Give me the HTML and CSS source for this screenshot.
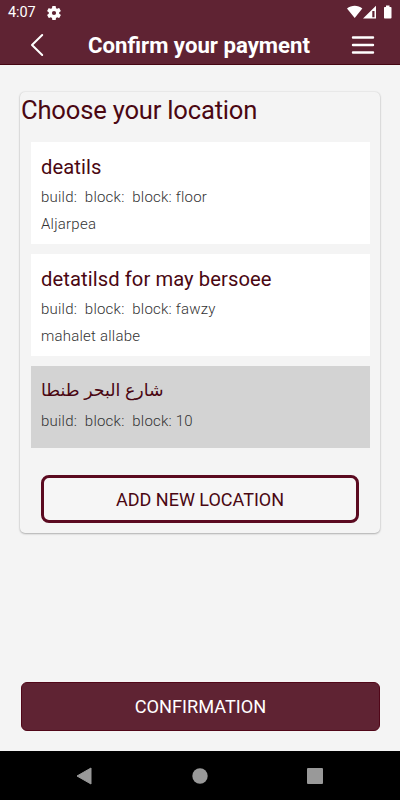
FILE: index.html
```html
<!DOCTYPE html>
<html lang="en">
<head>
<meta charset="utf-8">
<meta name="viewport" content="width=device-width, initial-scale=1">
<title>Confirm your payment</title>
<link rel="stylesheet" href="styles.css">
</head>
<body>
<div class="screen">
  <header class="top">
    <div class="status">
      <span class="time">4:07</span>
      <svg class="gear" width="14" height="14" viewBox="2 2 20 20"><path fill="#fff" fill-rule="evenodd" d="M19.4 13a7.500 7.500 0 0 0 0-2l2.100-1.650a.5.5 0 0 0 .12-.64l-2-3.460a.5.5 0 0 0-.61-.22l-2.490 1a7.300 7.300 0 0 0-1.690-.98l-.38-2.650A.49.49 0 0 0 14 2h-4a.49.49 0 0 0-.49.42l-.38 2.650c-.61.25-1.170.59-1.690.98l-2.490-1a.5.5 0 0 0-.61.22l-2 3.460a.5.5 0 0 0 .12.64L4.570 11a7.900 7.900 0 0 0 0 2l-2.110 1.650a.5.5 0 0 0-.12.64l2 3.460c.12.22.39.3.61.22l2.490-1c.52.4 1.080.73 1.690.98l.38 2.650c.03.24.24.4.49.4h4c.25 0 .46-.16.49-.4l.38-2.650a7.300 7.300 0 0 0 1.690-.98l2.490 1c.23.09.49 0 .61-.22l2-3.460a.5.5 0 0 0-.12-.64zM12 15a3 3 0 1 1 0-6 3 3 0 0 1 0 6z"/></svg>
      <svg class="signals" width="46" height="15" viewBox="0 0 46 15"><path fill="#fff" d="M0 3.500C4.500-.2 11-.2 15.300 3.500L7.700 13z"/><path fill="#fff" fill-rule="evenodd" d="M16 13.500 29 .8v12.700zM25.300 5.900v6.300h2.200V5.900z"/><path fill="#fff" d="M39 .5h3.500V2h1.200q.8 0 .8.800v10q0 .7-.8.700h-6q-.7 0-.7-.7v-10q0-.8.700-.8H39z"/></svg>
    </div>
    <div class="bar">
      <svg class="back" width="14" height="24" viewBox="0 0 14 24"><path d="M12.200 2 2 12l10.200 10" fill="none" stroke="#fff" stroke-width="2" stroke-linecap="round" stroke-linejoin="round"/></svg>
      <h1 class="title">Confirm your payment</h1>
      <svg class="menu" width="24" height="20" viewBox="0 0 24 20"><path d="M2 2.500h20M2 10h20M2 17.500h20" stroke="#fff" stroke-width="2.400" stroke-linecap="round"/></svg>
    </div>
  </header>
  <main class="content">
    <section class="card">
      <h2 class="heading">Choose your location</h2>
      <div class="list">
        <article class="place">
          <h3 class="name">deatils</h3>
          <p class="line">build:&nbsp; block:&nbsp; block: floor</p>
          <p class="line">Aljarpea</p>
        </article>
        <article class="place">
          <h3 class="name">detatilsd for may bersoee</h3>
          <p class="line">build:&nbsp; block:&nbsp; block: fawzy</p>
          <p class="line">mahalet allabe</p>
        </article>
        <article class="place selected">
          <h3 class="name arabic" lang="ar"><bdi>شارع البحر طنطا</bdi></h3>
          <p class="line">build:&nbsp; block:&nbsp; block: 10</p>
        </article>
      </div>
      <button class="add">ADD NEW LOCATION</button>
    </section>
    <button class="confirm">CONFIRMATION</button>
  </main>
  <nav class="nav">
    <svg width="16" height="18" viewBox="0 0 16 18"><path d="M15 1v16L1 9z" fill="#999" stroke="#999" stroke-linejoin="round"/></svg>
    <svg width="16" height="16" viewBox="0 0 16 16"><circle cx="8" cy="8" r="7.700" fill="#999"/></svg>
    <svg width="16" height="16" viewBox="0 0 16 16"><rect width="16" height="16" rx="1" fill="#999"/></svg>
  </nav>
</div>
</body>
</html>
```
FILE: styles.css
```css
* { box-sizing: border-box; }
body, h1, h2, h3, p { margin: 0; font-weight: 400; }
body { font-family: Roboto, "Noto Sans", sans-serif; background: #f4f4f4; }
svg { display: block; flex: none; }
button { font-family: inherit; font-weight: 400; padding: 0; }

.screen { width: 400px; height: 800px; display: flex; flex-direction: column; overflow: hidden; }

.top { height: 65px; background: #5f2333; border-bottom: 1px solid #450512; color: #fff; }
.status { height: 25px; display: flex; align-items: center; padding: 0 7px 0 8px; }
.time { font-size: 14.500px; line-height: 25px; letter-spacing: -.1px; }
.gear { margin-left: 11px; }
.signals { margin-left: auto; margin-top: -1px; }
.bar { height: 39px; display: flex; align-items: center; justify-content: space-between; padding: 0 25px 0 30px; }
.title { padding: 2px 0 0 3px; font-size: 22.200px; line-height: 39px; font-weight: 700; white-space: nowrap; }

.content { flex: 1; display: flex; flex-direction: column; justify-content: space-between; padding: 27px 20px 20px; }
.card { height: 441px; border-radius: 5px; background: #f4f4f4; box-shadow: 0 1px 2px rgba(0,0,0,.25), 0 0 2px rgba(0,0,0,.14); }
.heading { padding-left: 1px; font-size: 25.600px; line-height: 36px; letter-spacing: -.2px; color: #4a0712; white-space: nowrap; }
.list { display: flex; flex-direction: column; gap: 10px; padding: 14px 10px 0 11px; }
.place { height: 102px; padding: 10px 10px 0; background: #fff; }
.name { font-size: 20.200px; line-height: 30px; letter-spacing: .08px; color: #4a0712; white-space: nowrap; }
.line { font-size: 15px; font-weight: 300; line-height: 27px; letter-spacing: .22px; color: #333; white-space: nowrap; }
.name + .line { margin-top: 2px; }
.selected { height: 82px; background: #d3d3d3; padding-top: 6px; }
.arabic { font-size: 17.400px; line-height: 34px; font-family: "Noto Sans", "DejaVu Sans", sans-serif; }
.add { display: block; width: 318px; height: 48px; margin: 27px 0 0 21px; border: 3px solid #5b0a20; border-radius: 8px; background: #f6f6f6; color: #4a0712; font-size: 18px; }
.confirm { height: 49px; margin-left: 1px; border: 1px solid #510719; border-radius: 6px; background: #5f2333; color: #fff; font-size: 18.200px; }

.nav { height: 49px; display: flex; align-items: center; justify-content: space-between; padding: 0 77px 0 76px; background: #000; }
```
